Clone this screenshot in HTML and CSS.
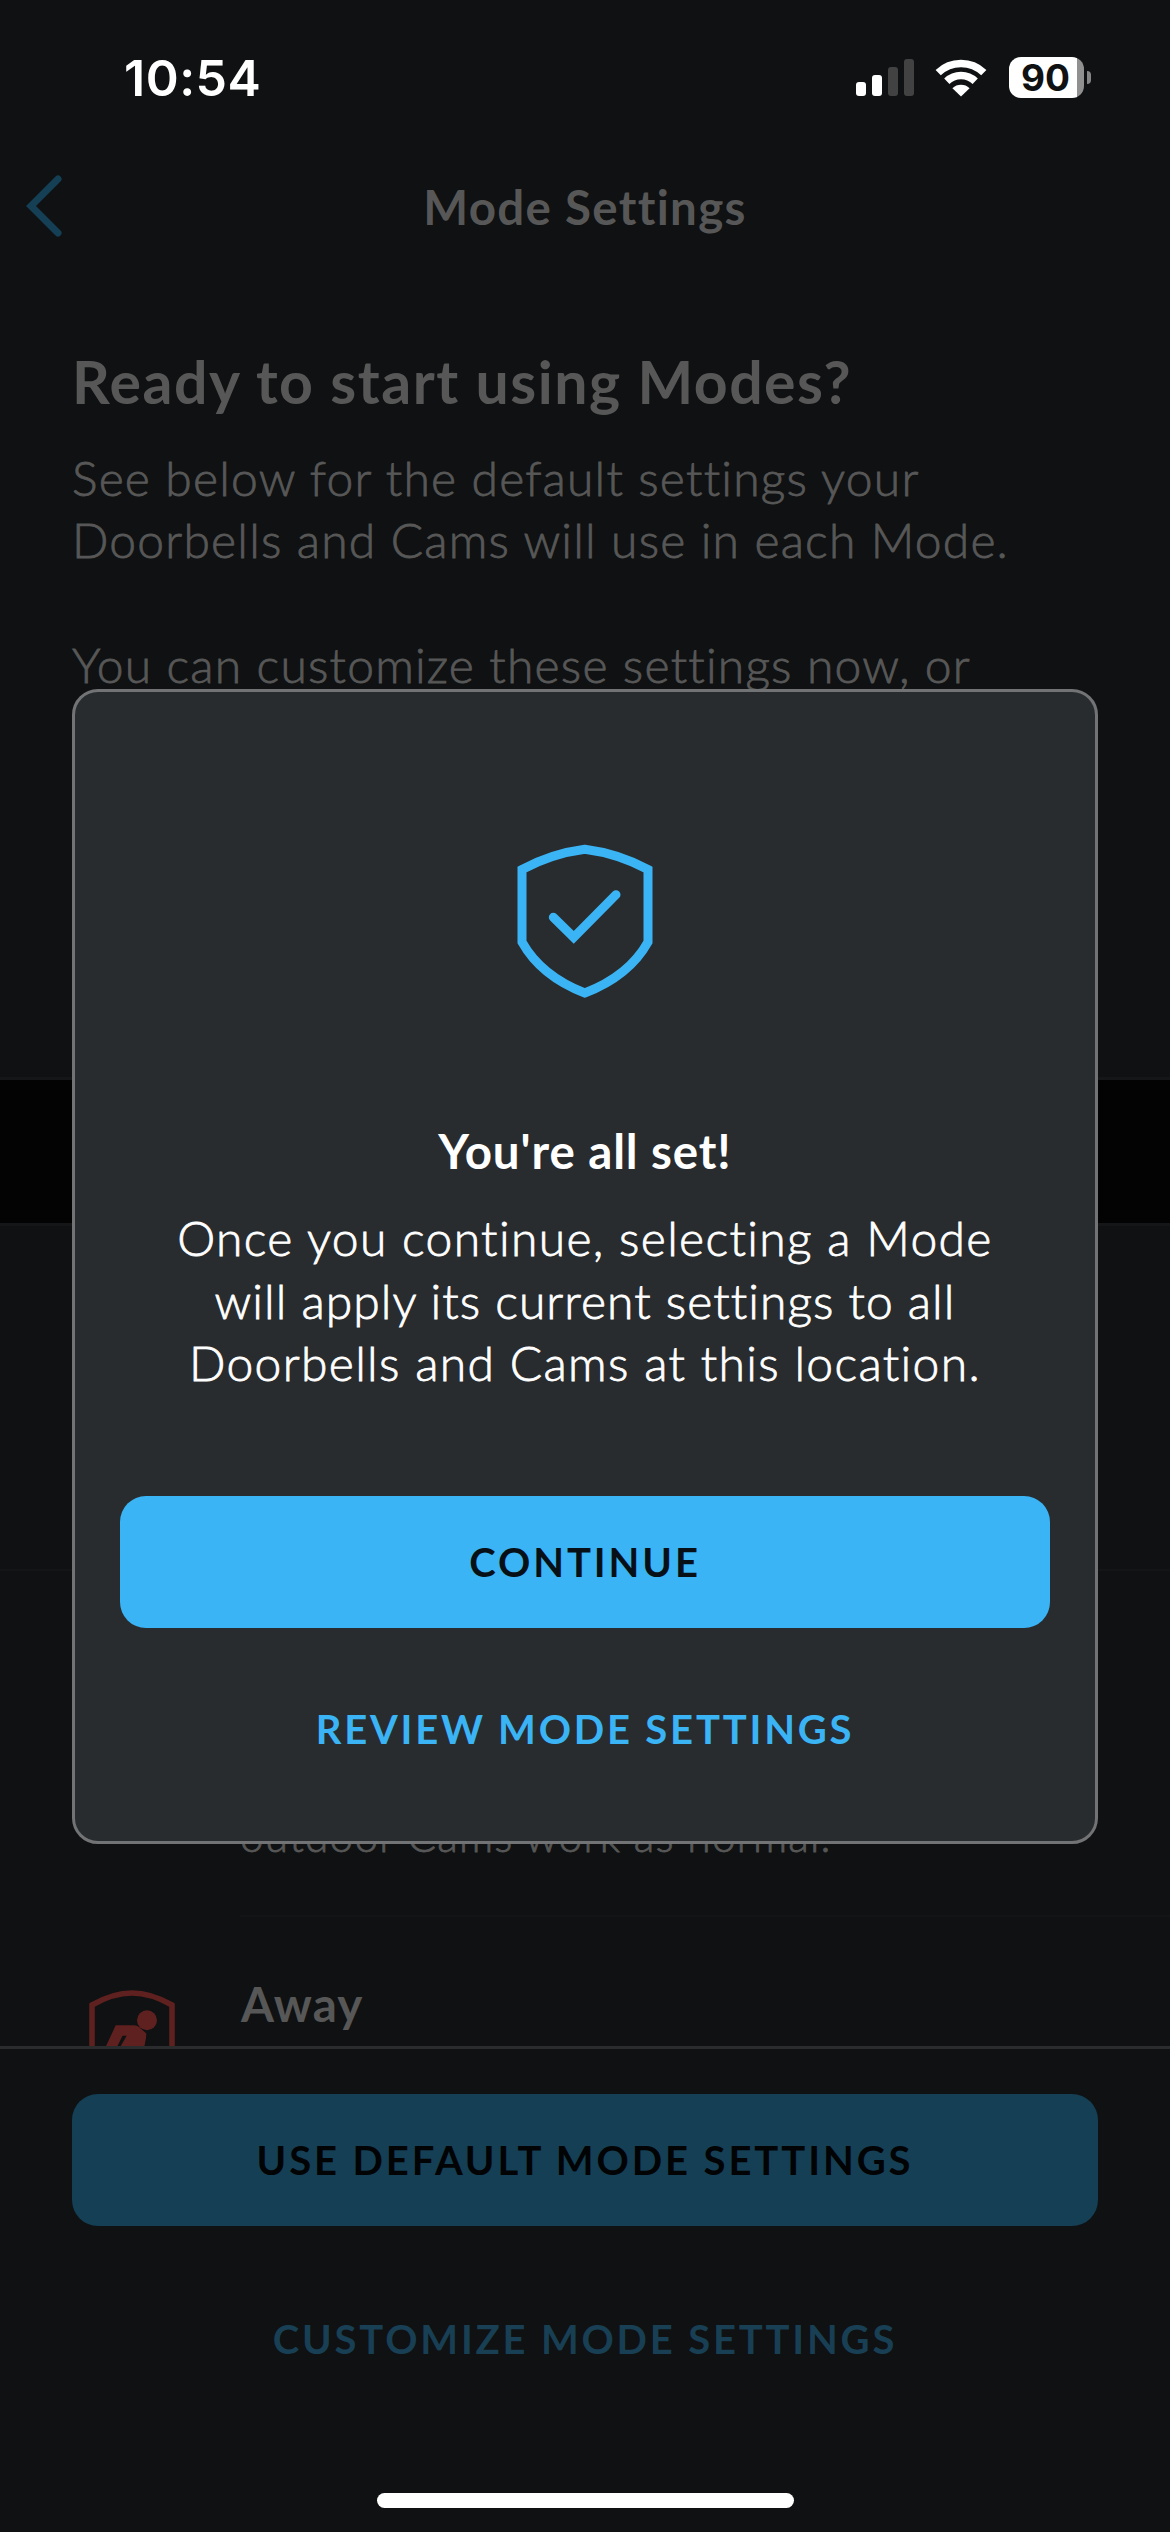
FILE: index.html
```html
<!DOCTYPE html>
<html lang="en">
<head>
<meta charset="utf-8">
<title>Mode Settings</title>
<link rel="stylesheet" href="styles.css">
</head>
<body>
<div class="screen">
  <header class="status">
    <span class="time">10:54</span>
    <div class="indicators">
      <svg class="signal" width="58" height="37" viewBox="0 0 58 37">
        <rect x="0" y="23" width="10" height="14" rx="3" fill="#fff"/>
        <rect x="16" y="16" width="10" height="21" rx="3" fill="#fff"/>
        <rect x="32" y="8" width="10" height="29" rx="3" fill="#424242"/>
        <rect x="48" y="0" width="10" height="37" rx="3" fill="#424242"/>
      </svg>
      <svg class="wifi" width="52" height="38" viewBox="0 0 52 38">
        <g fill="none" stroke="#fff" stroke-width="7.5">
          <path d="M3.2 13.6A33 33 0 0 1 48.8 13.6"/>
          <path d="M11.8 22.2A20.5 20.5 0 0 1 40.2 22.2"/>
        </g>
        <path d="M26 37.5L17.4 29.2A12.6 12.6 0 0 1 34.6 29.2Z" fill="#fff"/>
      </svg>
      <div class="battery"><span class="battery-level">90</span></div>
      <span class="battery-tip"></span>
    </div>
  </header>

  <nav class="nav">
    <svg class="back" width="38" height="64" viewBox="0 0 38 64">
      <path d="M33 4L6 31L33 58" fill="none" stroke="#153f55" stroke-width="7" stroke-linecap="round"/>
    </svg>
    <h1 class="nav-title">Mode Settings</h1>
  </nav>

  <main class="content">
    <section class="intro">
      <h2 class="intro-title">Ready to start using Modes?</h2>
      <p class="copy">See below for the default settings your<br>Doorbells and Cams will use in each Mode.</p>
      <p class="copy">You can customize these settings now, or</p>
    </section>
    <section class="modes">
      <div class="mode-first"></div>
      <div class="mode-home"><p class="copy mode-copy">outdoor Cams work as normal.</p></div>
      <div class="mode-away">
        <svg class="away-icon" width="86" height="56" viewBox="0 0 86 56">
          <path d="M3 58V15Q24 3 43 3Q62 3 83 15V58" fill="none" stroke="#5e211f" stroke-width="5.6"/>
          <circle cx="58" cy="30.3" r="10" fill="#5e211f"/>
          <path d="M16.6 57L26.7 35.3H45Q48 35.3 50 37L57.3 43.5L57 48L55.3 57H31.2L37.7 45.7H33.5L28 57Z" fill="#5e211f"/>
        </svg>
        <h3 class="mode-name">Away</h3>
      </div>
    </section>
  </main>

  <footer class="actions">
    <div class="button button-dim">USE DEFAULT MODE SETTINGS</div>
    <div class="link link-dim">CUSTOMIZE MODE SETTINGS</div>
    <div class="home-bar"></div>
  </footer>

  <div class="modal" role="dialog">
    <svg class="shield" width="136" height="155" viewBox="0 0 136 155">
      <g fill="none" stroke="#3ab4f5" stroke-width="9">
        <path d="M5 25.5Q35 9.5 67.8 5.3Q101 9.5 131 25.5V98Q112 132 67.8 149Q24 132 5 98Z"/>
        <path d="M36.3 73.3L56.7 93.3L99 50.7" stroke-linecap="round"/>
      </g>
    </svg>
    <h2 class="modal-title">You're all set!</h2>
    <p class="modal-copy">Once you continue, selecting a Mode<br><span class="tight">will apply its current settings to all</span><br>Doorbells and Cams at this location.</p>
    <div class="button">CONTINUE</div>
    <div class="link">REVIEW MODE SETTINGS</div>
  </div>
</div>
</body>
</html>
```
FILE: styles.css
```css
* { box-sizing: border-box; margin: 0; padding: 0; }

body {
  background: #0f1112;
  font-family: Lato, "Liberation Sans", sans-serif;
  font-variant-ligatures: none;
}

.screen {
  position: relative;
  display: flex;
  flex-direction: column;
  width: 1170px;
  height: 2532px;
  overflow: hidden;
  background: #0f1112;
  color: #575757;
}

/* Status bar */
.status {
  display: flex;
  justify-content: space-between;
  align-items: center;
  height: 141px;
  padding: 14px 79px 0 124px;
  font-family: Inter, "Liberation Sans", sans-serif;
  color: #fff;
}
.time { font-size: 50px; font-weight: 600; letter-spacing: 0.5px; }
.indicators { display: flex; align-items: center; }
.signal { margin-right: 21px; }
.wifi { margin-right: 22px; }
.battery {
  width: 75px;
  height: 41px;
  padding-left: 12px;
  border-radius: 12px;
  background: linear-gradient(90deg, #fff 68px, #909090 68px);
  color: #0f1112;
}
.battery-level {
  display: block;
  font-size: 37px;
  font-weight: 700;
  line-height: 41px;
}
.battery-tip {
  width: 4px;
  height: 13px;
  margin-left: 3px;
  border-radius: 0 4px 4px 0;
  background: #858585;
}

/* Navigation */
.nav {
  display: grid;
  grid-template-columns: 120px 1fr 120px;
  align-items: center;
  height: 132px;
}
.back { margin-left: 25px; }
.nav-title {
  font-size: 47.5px;
  font-weight: 700;
  letter-spacing: 1.3px;
  line-height: 56px;
  text-align: center;
}

/* Scrolling content */
.content { height: 1773px; overflow: hidden; }
.intro {
  height: 807px;
  padding: 74px 72px 0;
  border-bottom: 3px solid #151617;
}
.intro-title {
  margin-bottom: 29.5px;
  font-size: 59px;
  font-weight: 700;
  letter-spacing: 1.5px;
  line-height: 70px;
}
.copy {
  margin-bottom: 62.5px;
  font-size: 48px;
  font-weight: 300;
  letter-spacing: 1.2px;
  line-height: 62.5px;
  white-space: nowrap;
  -webkit-text-stroke: 0.8px currentColor;
}
.modes {
  border-top: 143px solid #030303;
}
.mode-first {
  height: 348px;
  border-top: 3px solid #151617;
  border-bottom: 2px solid #131516;
}
.mode-home {
  display: flex;
  align-items: flex-end;
  height: 346px;
  margin-left: 240px;
  padding-bottom: 48px;
  border-bottom: 2px solid #121415;
}
.mode-copy {
  margin: 0;
  font-size: 42.4px;
  letter-spacing: 1.2px;
}
.mode-away {
  display: flex;
  align-items: flex-start;
  gap: 66px;
  padding: 59px 0 0 89px;
}
.away-icon { margin-top: 14px; }
.mode-name {
  font-size: 47.5px;
  font-weight: 700;
  letter-spacing: 1.2px;
  line-height: 56px;
}

/* Buttons */
.button {
  display: flex;
  justify-content: center;
  align-items: center;
  width: 100%;
  height: 132px;
  border-radius: 26px;
  background: #3ab4f5;
  color: #071016;
  font-size: 40px;
  font-weight: 700;
  letter-spacing: 2.9px;
}
.button-dim { background: #153f54; color: #020304; }
.link {
  font-size: 40px;
  font-weight: 700;
  line-height: 50px;
  letter-spacing: 2.8px;
  text-align: center;
  color: #3ab4f5;
}
.link-dim { color: #183f53; }

/* Bottom actions */
.actions {
  display: flex;
  flex-direction: column;
  align-items: center;
  height: 486px;
  padding: 45px 72px 0;
  border-top: 3px solid #2a2c2d;
}
.link-dim { margin-top: 88px; }
.home-bar {
  width: 417px;
  height: 15px;
  margin-top: 129px;
  border-radius: 8px;
  background: #fff;
}

/* Dialog over the screen */
.modal {
  position: absolute;
  top: 689px;
  left: 72px;
  display: flex;
  flex-direction: column;
  align-items: center;
  width: 1026px;
  height: 1155px;
  padding: 152px 45px 0;
  border: 3px solid #717375;
  border-radius: 26px;
  background: #292c2e;
  color: #fff;
}
.modal-title {
  margin-top: 124px;
  font-size: 47.5px;
  font-weight: 700;
  letter-spacing: 0.9px;
  line-height: 56px;
}
.modal-copy {
  margin: 28px 0 101.5px;
  font-size: 48px;
  font-weight: 300;
  letter-spacing: 1.35px;
  line-height: 62.5px;
  text-align: center;
  white-space: nowrap;
  -webkit-text-stroke: 0.8px currentColor;
}
.tight { letter-spacing: 1.05px; }
.modal .link { margin-top: 75.5px; }
```
